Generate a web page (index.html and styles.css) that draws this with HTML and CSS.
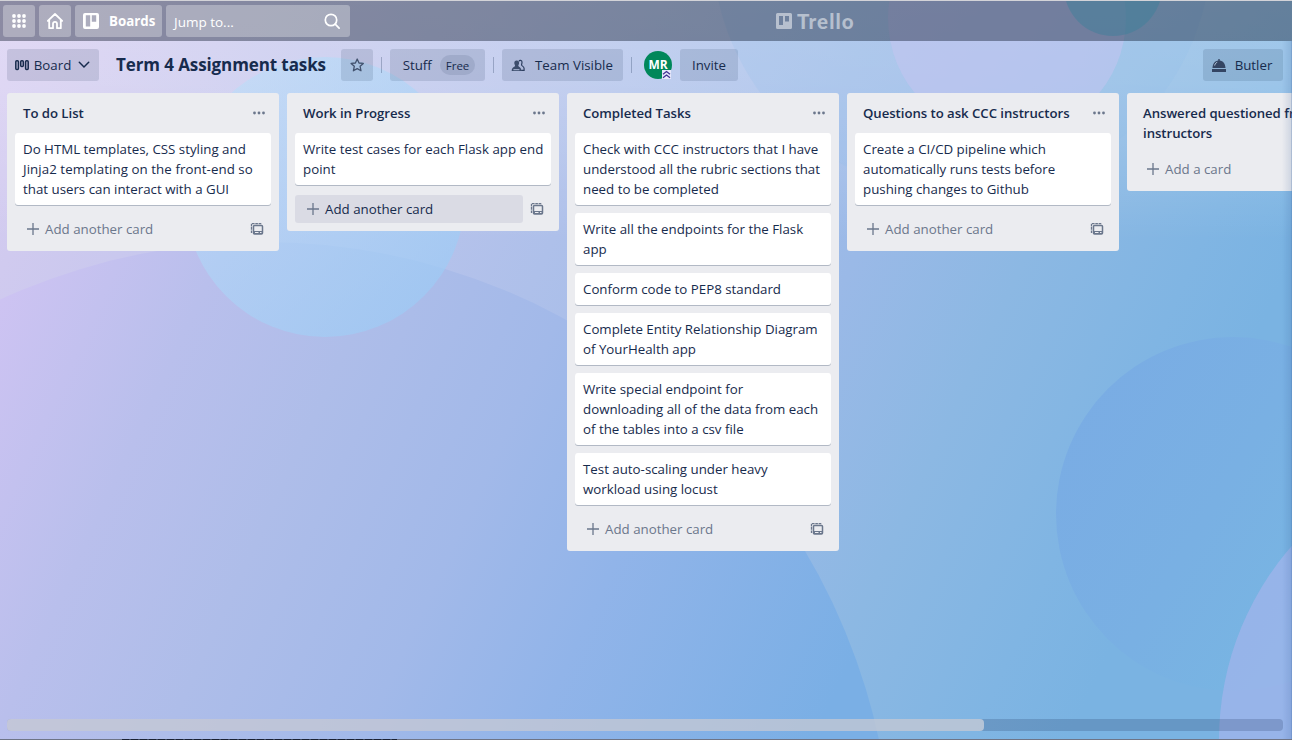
FILE: index.html
```html
<!DOCTYPE html>
<html lang="en">
<head>
<meta charset="utf-8">
<title>Term 4 Assignment tasks</title>
<link rel="stylesheet" href="styles.css">
</head>
<body>
<svg class="defs" width="0" height="0">
  <symbol id="plus" viewBox="0 0 12 12"><path d="M6 0v12M0 6h12" stroke="currentColor" stroke-width="1.3" fill="none"/></symbol>
  <symbol id="dots" viewBox="0 0 14 4"><circle cx="2.500" cy="2" r="1.4"/><circle cx="7" cy="2" r="1.4"/><circle cx="11.500" cy="2" r="1.4"/></symbol>
  <symbol id="template" viewBox="0 0 14 14"><path d="M1.500 11V1.600H12" fill="none" stroke="currentColor" stroke-width="1.300" stroke-dasharray="2.600 .7"/><rect x="3.500" y="3.500" width="9" height="8.500" rx="1" fill="none" stroke="currentColor" stroke-width="1.500"/><path d="M3.500 9h9v3h-9z"/><path d="M5 10.500h3.500M10 10.500h1.500" stroke="#ebecf0"/></symbol>
</svg>
<div class="app">
  <svg class="wallpaper" viewBox="0 0 1292 740">
    <defs>
      <linearGradient id="base" gradientUnits="userSpaceOnUse" x1="0" y1="0" x2="1161" y2="542">
        <stop offset="0" stop-color="#d8cdf2"/><stop offset=".09" stop-color="#d0caef"/><stop offset=".47" stop-color="#aec0ea"/><stop offset=".69" stop-color="#9ab9e7"/><stop offset=".81" stop-color="#8cb8e3"/><stop offset=".93" stop-color="#80b5e3"/><stop offset="1" stop-color="#7ab3e2"/>
      </linearGradient>
      <linearGradient id="large" gradientUnits="userSpaceOnUse" x1="0" y1="0" x2="1161" y2="542">
        <stop offset=".1" stop-color="#cdc3f2"/><stop offset=".24" stop-color="#b9bfec"/><stop offset=".36" stop-color="#aebde9"/><stop offset=".5" stop-color="#a2b9e9"/><stop offset=".62" stop-color="#91b4e9"/><stop offset=".82" stop-color="#7aafe5"/>
      </linearGradient>
      <linearGradient id="glow" x1="0" y1="0" x2="0" y2="1"><stop offset="0" stop-color="#fff" stop-opacity=".26"/><stop offset=".35" stop-color="#fff" stop-opacity=".22"/><stop offset="1" stop-color="#fff" stop-opacity="0"/></linearGradient>
      <linearGradient id="blue" x1="0" y1="0" x2="1" y2="1"><stop offset="0" stop-color="#bce2fa" stop-opacity=".5"/><stop offset="1" stop-color="#98c8f5" stop-opacity=".7"/></linearGradient>
      <linearGradient id="right" x1="0" y1=".2" x2="1" y2=".8"><stop offset="0" stop-color="#7aace4"/><stop offset=".45" stop-color="#79b0e3"/><stop offset="1" stop-color="#77b9e2"/></linearGradient>
    </defs>
    <rect width="1292" height="740" fill="url(#base)"/>
    <rect width="1292" height="240" fill="url(#glow)"/>
    <circle cx="962" cy="-55" r="250" fill="#8fbdea" fill-opacity=".2"/>
    <circle cx="263" cy="872" r="630" fill="url(#large)"/>
    <circle cx="325" cy="197" r="140" fill="url(#blue)"/>
    <circle cx="1007" cy="18" r="119" fill="#c4c4f1" fill-opacity=".55"/>
    <circle cx="1113" cy="-13" r="49" fill="#65c8e8" fill-opacity=".5"/>
    <circle cx="1233" cy="514" r="177" fill="url(#right)"/>
    <circle cx="1514" cy="740" r="295" fill="#a9b4ee" fill-opacity=".62"/>
  </svg>

  <header class="topbar">
    <div class="topbar-left">
      <button class="nav nav-icon"><svg width="14" height="14" viewBox="0 0 14 14" fill="#fff"><circle cx="2" cy="2" r="1.9"/><circle cx="7" cy="2" r="1.9"/><circle cx="12" cy="2" r="1.9"/><circle cx="2" cy="7" r="1.9"/><circle cx="7" cy="7" r="1.9"/><circle cx="12" cy="7" r="1.9"/><circle cx="2" cy="12" r="1.9"/><circle cx="7" cy="12" r="1.9"/><circle cx="12" cy="12" r="1.9"/></svg></button>
      <button class="nav nav-icon"><svg width="18" height="18" viewBox="0 0 18 18" fill="none" stroke="#fff" stroke-width="1.8" stroke-linejoin="round" stroke-linecap="round"><path d="M1.8 8.8 9 2l7.200 6.800M3.200 8v8.200h3.800v-4.400a2 2 0 0 1 4 0v4.400h3.800V8"/></svg></button>
      <button class="nav nav-boards"><svg width="16" height="16" viewBox="0 0 16 16"><path fill="#fff" fill-rule="evenodd" d="M2 0h12a2 2 0 0 1 2 2v12a2 2 0 0 1-2 2H2a2 2 0 0 1-2-2V2a2 2 0 0 1 2-2zm.8 2.200v11.300h4.400V2.200zm6 0v6.500h4.400V2.200z"/></svg><span>Boards</span></button>
      <div class="search"><span>Jump to...</span><svg width="16" height="16" viewBox="0 0 16 16" fill="none" stroke="#fff" stroke-width="1.7" stroke-linecap="round"><circle cx="7" cy="7" r="5.700"/><path d="m11.200 11.200 3.900 3.900"/></svg></div>
    </div>
    <div class="logo"><svg width="16" height="16" viewBox="0 0 16 16"><path fill="currentColor" fill-rule="evenodd" d="M1.500 0h13A1.500 1.500 0 0 1 16 1.500v13a1.500 1.500 0 0 1-1.500 1.500h-13A1.500 1.500 0 0 1 0 14.500v-13A1.500 1.500 0 0 1 1.500 0zM3 3v9h4V3zm6 0v5.500h4V3z"/></svg><span>Trello</span></div>
  </header>

  <div class="boardbar">
    <button class="btn btn-view"><svg width="14" height="11" viewBox="0 0 14 11" fill="none" stroke="#172b4d" stroke-width="1.500"><rect x=".8" y=".8" width="2.600" height="8.600" rx="1"/><rect x="5.700" y=".8" width="2.600" height="5.800" rx="1"/><rect x="10.600" y=".8" width="2.600" height="8.600" rx="1"/></svg><span>Board</span><svg width="12" height="8" viewBox="0 0 12 8" fill="none" stroke="#172b4d" stroke-width="1.500" stroke-linecap="round"><path d="m1.300 1.300 4.700 4.700 4.700-4.700"/></svg></button>
    <h1 class="title">Term 4 Assignment tasks</h1>
    <button class="btn btn-star"><svg width="14" height="14" viewBox="0 0 14 14" fill="none" stroke="#42526e" stroke-width="1.300" stroke-linejoin="round"><path d="m7.200 1 1.800 4 4.300.4-3.200 2.900.9 4.500-3.800-2.200-3.800 2.200.9-4.500L1.100 5.400 5.400 5z"/></svg></button>
    <i class="sep"></i>
    <button class="btn btn-stuff"><span>Stuff</span><span class="pill">Free</span></button>
    <i class="sep sep-b"></i>
    <button class="btn btn-visible"><svg width="14" height="13" viewBox="0 0 14 13"><path d="M8 2.200C8.500.9 10.900.9 11 3c.1 1.500-.7 2.600-.4 3.200.4.700 2.500 1.300 2.500 3.400v1.800h-3" fill="none" stroke="#2d3f60" stroke-width="1.200"/><path d="M5.700 1.500c1.800 0 2.600 1.300 2.400 2.800-.1 1.300-.9 1.900-.8 2.800C8 8 10.300 8.400 10.300 12H.7C.7 8.400 3.500 8 4.100 7.100c.1-.9-.7-1.500-.8-2.800-.1-1.500.6-2.800 2.400-2.800z" fill="#3c4d6c"/><path d="M2.400 10.700h6" stroke="#aebcd9"/></svg><span>Team Visible</span></button>
    <i class="sep sep-c"></i>
    <div class="avatar"><span>MR</span><svg class="badge" width="9" height="9" viewBox="0 0 9 9"><rect width="9" height="9" fill="#e6e8fb"/><path d="m1 4.300 3.500-2.800L8 4.300M1 7.800 4.500 5 8 7.800" fill="none" stroke="#403294" stroke-width="1.300"/></svg></div>
    <button class="btn btn-invite">Invite</button>
    <button class="btn btn-butler"><svg width="14" height="13" viewBox="0 0 14 13" fill="#344563"><path d="M6.300 0h1.400v1.500C11 1.800 13.300 4.500 13.500 9H.5C.7 4.500 3 1.800 6.300 1.500z"/><path d="M0 10h14v3H0z"/><path d="M2.700 6.500C3 4.800 3.900 3.800 5.200 3.300" stroke="#c5d5e8" fill="none"/></svg><span>Butler</span></button>
  </div>

  <main class="lists">
    <section class="list">
      <div class="list-head"><h2>To do List</h2><svg class="dots"><use href="#dots"/></svg></div>
      <div class="cards"><p class="card">Do HTML templates, CSS styling and<br><span class="loose">Jinja2 templating on the front-end so</span><br>that users can interact with a GUI</p></div>
      <div class="list-foot"><a class="add"><svg class="plus"><use href="#plus"/></svg>Add another card</a><svg class="tpl"><use href="#template"/></svg></div>
    </section>
    <section class="list">
      <div class="list-head"><h2>Work in Progress</h2><svg class="dots"><use href="#dots"/></svg></div>
      <div class="cards"><p class="card">Write test cases for each Flask app end<br>point</p></div>
      <div class="list-foot"><a class="add hovered"><svg class="plus"><use href="#plus"/></svg>Add another card</a><svg class="tpl"><use href="#template"/></svg></div>
    </section>
    <section class="list">
      <div class="list-head"><h2>Completed Tasks</h2><svg class="dots"><use href="#dots"/></svg></div>
      <div class="cards">
        <p class="card">Check with CCC instructors that I have<br>understood all the rubric sections that<br>need to be completed</p>
        <p class="card">Write all the endpoints for the Flask<br>app</p>
        <p class="card">Conform code to PEP8 standard</p>
        <p class="card">Complete Entity Relationship Diagram<br>of YourHealth app</p>
        <p class="card">Write special endpoint for<br>downloading all of the data from each<br>of the tables into a csv file</p>
        <p class="card">Test auto-scaling under heavy<br>workload using locust</p>
      </div>
      <div class="list-foot"><a class="add"><svg class="plus"><use href="#plus"/></svg>Add another card</a><svg class="tpl"><use href="#template"/></svg></div>
    </section>
    <section class="list">
      <div class="list-head"><h2>Questions to ask CCC instructors</h2><svg class="dots"><use href="#dots"/></svg></div>
      <div class="cards"><p class="card">Create a CI/CD pipeline which<br>automatically runs tests before<br>pushing changes to Github</p></div>
      <div class="list-foot"><a class="add"><svg class="plus"><use href="#plus"/></svg>Add another card</a><svg class="tpl"><use href="#template"/></svg></div>
    </section>
    <section class="list">
      <div class="list-head"><h2>Answered questioned from<br>instructors</h2></div>
      <div class="list-foot foot-empty"><a class="add"><svg class="plus"><use href="#plus"/></svg>Add a card</a></div>
    </section>
  </main>

  <div class="scroll"><div class="thumb"></div></div>
  <div class="window-edge"><div class="edge-dark"></div></div>
  <div class="edge-shadow"></div>
</div>
</body>
</html>
```
FILE: styles.css
```css
* { box-sizing: border-box; }
html, body { margin: 0; height: 100%; overflow: hidden; }
body { font: 13.3px/20px "Open Sans", "Noto Sans", sans-serif; color: #172b4d; }
button { font: inherit; color: inherit; border: 0; padding: 0; margin: 0; }
svg { flex: none; display: block; }
h1, h2, p { margin: 0; }
.defs { position: absolute; }
.app { position: relative; width: 1292px; height: 740px; display: flex; flex-direction: column; overflow: hidden; isolation: isolate; white-space: nowrap; border-top: 1px solid #d3d3d8; }
.wallpaper { position: absolute; top: -1px; left: 0; width: 1292px; height: 740px; z-index: -1; }

.topbar { height: 40px; flex: none; display: flex; align-items: center; background: rgba(0, 10, 30, .38); padding-left: 3px; color: #fff; }
.topbar-left { display: flex; gap: 4px; width: 773px; }
.nav, .search { height: 32px; border-radius: 3px; background: rgba(255, 255, 255, .3); display: flex; align-items: center; }
.nav-icon { width: 32px; justify-content: center; }
.nav-boards { width: 87px; padding-left: 8px; gap: 10px; font-weight: 700; }
.search { width: 184px; padding: 2px 10px 0 8px; justify-content: space-between; font-size: 13.5px; }
.search svg { margin-top: -3px; }
.logo { display: flex; align-items: center; gap: 5px; color: rgba(255, 255, 255, .5); font: 900 20.5px/24px Lato, sans-serif; letter-spacing: 1.1px; }

.boardbar { height: 52px; flex: none; display: flex; align-items: flex-start; padding: 8px 9px 0 7px; }
.btn { height: 32px; border-radius: 3px; background: rgba(9, 30, 66, .12); display: flex; align-items: center; justify-content: center; }
.btn-view { width: 92px; gap: 5px; padding-right: 1px; }
.btn-view span { margin-right: 2px; }
.title { font-size: 17px; line-height: 32px; font-weight: 700; width: 225px; margin-left: 17px; letter-spacing: -.1px; }
.btn-star { width: 32px; }
.sep { width: 1px; height: 16px; margin: 8px 8px 0; background: rgba(9, 30, 66, .25); }
.btn-stuff { width: 95px; gap: 8px; padding-left: 3px; }
.pill { height: 20px; padding: 0 6px; border-radius: 10px; background: rgba(9, 30, 66, .1); font-size: 11.5px; line-height: 21px; }
.btn-visible { width: 121px; gap: 10px; padding-right: 1px; }
.sep-c { margin-right: 12px; }
.avatar { position: relative; width: 28px; height: 28px; margin: 2px 8px 0 0; border-radius: 50%; background: #00875a; color: #fff; font-weight: 700; font-size: 12px; line-height: 28px; text-align: center; }
.badge { position: absolute; right: 1px; bottom: 0; }
.btn-invite { width: 58px; }
.btn-butler { width: 80px; gap: 9px; padding-right: 2px; margin-left: auto; }

.lists { flex: 1; display: flex; align-items: flex-start; gap: 8px; padding-left: 7px; }
.list { width: 272px; flex: none; background: #ebecf0; border-radius: 3px; }
.list-head { display: flex; justify-content: space-between; padding: 10px 13px 0 16px; }
.list-head h2 { font-size: 13.200px; line-height: 20px; font-weight: 600; letter-spacing: -.04px; }
.dots { width: 14px; height: 4px; margin-top: 8px; fill: #6b778c; }
.cards { display: flex; flex-direction: column; gap: 8px; padding: 10px 8px 0; }
.card { background: #fff; border-radius: 3px; box-shadow: 0 1px 0 rgba(9, 30, 66, .25); padding: 6px 8px; }
.loose { letter-spacing: .07px; }
.list-foot { display: flex; align-items: center; justify-content: space-between; padding: 10px 15px 8px 8px; color: #6b778c; }
.foot-empty { padding-top: 12px; }
.add { width: 228px; height: 28px; display: flex; align-items: center; gap: 6px; padding-left: 12px; border-radius: 3px; }
.hovered { background: #dadbe4; color: #172b4d; }
.plus { width: 12px; height: 12px; color: #6b778c; }
.tpl { width: 14px; height: 14px; fill: #6b778c; }

.scroll { height: 12px; margin: 0 9px 8px 7px; flex: none; border-radius: 4px; background: rgba(9, 30, 66, .18); }
.thumb { width: 977px; height: 12px; border-radius: 4px; background: rgba(212, 214, 222, .7); }
.window-edge { height: 1px; flex: none; background: #6e7486; padding-left: 122px; }
.edge-dark { width: 275px; height: 1px; background: repeating-linear-gradient(90deg, #1b2233 0 7px, #3c465c 7px 9px); }
.edge-shadow { position: absolute; top: 40px; right: 0; bottom: 1px; width: 10px; background: linear-gradient(90deg, transparent, rgba(40, 80, 140, .14)); border-right: 1px solid rgba(60, 100, 160, .35); }
```
